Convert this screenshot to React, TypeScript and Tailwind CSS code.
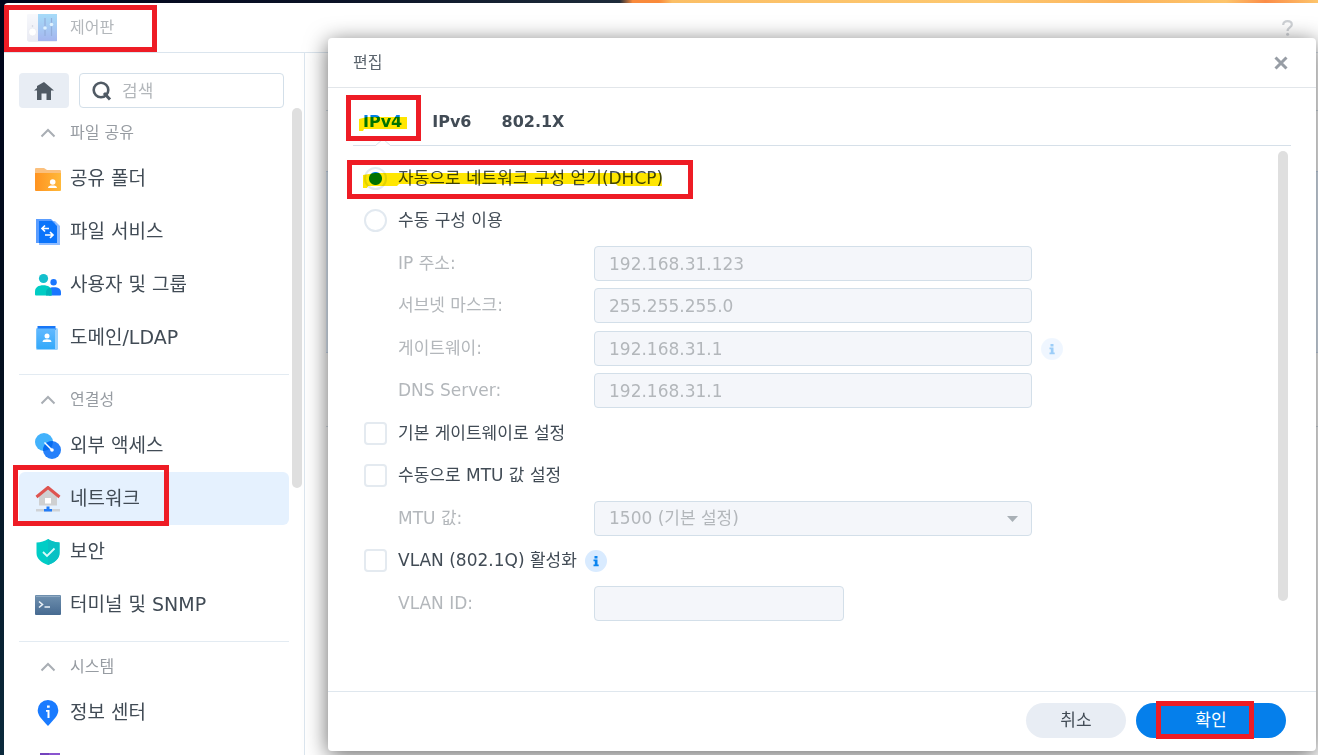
import { ReactNode, useState } from "react";
import clsx from "clsx";

interface NavItem {
  label: string;
  icon: ReactNode;
  active?: boolean;
}

interface NavGroup {
  title: string;
  items: NavItem[];
}

/* ---------- icons ---------- */

const ControlPanelIcon = () => (
  <svg width="30" height="28" viewBox="0 0 30 28" className="opacity-50">
    <defs>
      <linearGradient id="cpBlue" x1="0" y1="0" x2="0" y2="1">
        <stop offset="0" stopColor="#4fb9f3" />
        <stop offset="1" stopColor="#4c6fe0" />
      </linearGradient>
      <linearGradient id="cpGray" x1="0" y1="0" x2="0" y2="1">
        <stop offset="0" stopColor="#f1f3fa" />
        <stop offset="1" stopColor="#d5d8ea" />
      </linearGradient>
    </defs>
    <rect x="1" y="25" width="29" height="3" rx="1" fill="#dfe1ea" />
    <rect x="0" y="0" width="12" height="27" rx="1" fill="url(#cpGray)" />
    <rect x="11" y="0" width="19" height="27" fill="url(#cpBlue)" />
    <circle cx="5.5" cy="18" r="4" fill="#fff" stroke="#c9cde0" strokeWidth="0.6" />
    <circle cx="5.5" cy="12" r="0.8" fill="#9aa0b8" />
    <path d="M18 4v18M24.500 4v18" stroke="#2a5fb8" strokeWidth="1.200" />
    <circle cx="18" cy="14" r="1.800" fill="#bfe6ff" />
    <circle cx="24.500" cy="10.500" r="1.800" fill="#bfe6ff" />
  </svg>
);

const FolderIcon = () => (
  <svg width="26" height="26" viewBox="0 0 26 26">
    <defs>
      <linearGradient id="folder" x1="0" y1="0" x2="1" y2="0">
        <stop offset="0" stopColor="#ff9320" />
        <stop offset="1" stopColor="#ffb93a" />
      </linearGradient>
    </defs>
    <path d="M0 3a1 1 0 0 1 1-1h8l3 2h13a1 1 0 0 1 1 1v6H0z" fill="#fbc07d" />
    <path d="M0 7h26v17a1 1 0 0 1-1 1H1a1 1 0 0 1-1-1z" fill="url(#folder)" />
    <circle cx="17.700" cy="16" r="2.800" fill="#fff" />
    <path d="M13 22c0-2 2-2.500 4.500-2.500s4.500.5 4.500 2.500z" fill="#fff" />
  </svg>
);

const FileServiceIcon = () => (
  <svg width="26" height="26" viewBox="0 0 26 26">
    <path d="M4 2h16l5 5v19H4z" fill="#8fbcff" />
    <path d="M1 0h15l4 4v20H1z" fill="#5a9dff" />
    <path d="M4 2h13l5 5v17H4z" fill="#0b74fb" />
    <path d="M14 9.500H7m3-3-3 3 3 3M10 16h8m-3-3 3 3-3 3" fill="none" stroke="#fff" strokeWidth="1.700" />
  </svg>
);

const UsersIcon = () => (
  <svg width="26" height="26" viewBox="0 0 26 26">
    <circle cx="8.500" cy="6.500" r="4.600" fill="#14bfcd" />
    <circle cx="18.600" cy="10.300" r="3.200" fill="#1a76ff" />
    <path d="M14 23.500v-7c1-.8 2.500-1.200 5-1.200 4.500 0 7 1.700 7 5.200v2a1 1 0 0 1-1 1z" fill="#1a76ff" />
    <path d="M0 22.500v-3c0-4.200 3.500-6.200 8.300-6.200s8.200 2 8.200 6.200v4H1a1 1 0 0 1-1-1z" fill="#00ccc4" />
    <path d="M11 23.500v-3c0-2.500 1.400-4 3.500-4.800 1.300 1 2 2.300 2 4.300v3.500z" fill="#00b3b8" />
  </svg>
);

const DomainIcon = () => (
  <svg width="26" height="26" viewBox="0 0 26 26">
    <defs>
      <linearGradient id="domain" x1="0" y1="0" x2="0" y2="1">
        <stop offset="0" stopColor="#62b9ff" />
        <stop offset="1" stopColor="#33a9fa" />
      </linearGradient>
    </defs>
    <rect x="1" y="3" width="22" height="22" rx="1.500" fill="#9ad2fd" />
    <path d="M2.500 1h18v4h-18z" fill="#1877f7" />
    <path d="M1.500 3.500H20V24H3a1.500 1.500 0 0 1-1.500-1.500z" fill="url(#domain)" />
    <circle cx="12" cy="11" r="2.500" fill="#fff" />
    <path d="M7.500 17c0-2 2-2.700 4.500-2.700s4.500.7 4.500 2.700z" fill="#fff" />
  </svg>
);

const ExternalIcon = () => (
  <svg width="26" height="26" viewBox="0 0 26 26">
    <circle cx="9" cy="9" r="9" fill="#42b2fc" />
    <circle cx="17" cy="17" r="9" fill="#2680fa" />
    <path d="M8.100 15.500A9 9 0 0 1 17.800 8a9 9 0 0 1-9.700 10z" fill="#066cf0" />
    <path d="m9.500 9.500 7 7" stroke="#fff" strokeWidth="1.500" />
    <circle cx="17" cy="17" r="1.800" fill="#fff" />
  </svg>
);

const NetworkIcon = () => (
  <svg width="26" height="26" viewBox="0 0 26 26">
    <path d="M4 10 13 3l9 7v9.500H4z" fill="#cfd0d1" />
    <path d="M1 23h24v2.500H1z" fill="#cfd2d6" />
    <path d="M1.500 11 13 1.500 24.500 11" fill="none" stroke="#de5450" strokeWidth="3" />
    <rect x="10" y="12" width="6" height="5.500" fill="#fff" />
    <path d="M11.500 20.500h3V23H17v2.500H9V23h2.500z" fill="#217cf8" />
  </svg>
);

const ShieldIcon = () => (
  <svg width="26" height="26" viewBox="0 0 26 26">
    <path d="M13 0c3.500 2.300 7 3.300 11.500 3.500V14c0 6-5 9.500-11.500 12C6.500 23.500 1.500 20 1.500 14V3.500C6 3.300 9.500 2.300 13 0z" fill="#00cdc6" />
    <path d="M13 0c3.500 2.300 7 3.300 11.500 3.500V14c0 6-5 9.500-11.500 12z" fill="#08c1c4" />
    <path d="m8 13 4 4 7.500-7.500" fill="none" stroke="#d9fbfa" strokeWidth="1.800" />
  </svg>
);

const TerminalIcon = () => (
  <svg width="26" height="26" viewBox="0 0 26 26">
    <defs>
      <linearGradient id="term" x1="0" y1="0" x2="0" y2="1">
        <stop offset="0" stopColor="#6f90af" />
        <stop offset="1" stopColor="#466a91" />
      </linearGradient>
    </defs>
    <rect x="0" y="3" width="26" height="20" rx="1" fill="url(#term)" />
    <path d="M1 4.500h24" stroke="#8ea9c2" strokeWidth="1" />
    <path d="m4 9.500 3.500 3L4 15.500M9.500 15H15" fill="none" stroke="#e8eff6" strokeWidth="1.600" />
  </svg>
);

const InfoCenterIcon = () => (
  <svg width="26" height="26" viewBox="0 0 26 26">
    <path d="M13 0a10.300 10.300 0 0 1 10.300 10.500c0 5-4.500 9-10.300 15.500C7.200 19.500 2.700 15.500 2.700 10.500A10.300 10.300 0 0 1 13 0z" fill="#1a7bff" />
    <path d="M12 5.500h2.700v2.300H12zM11 10h3.500v8h-2v-6.300H11z" fill="#fff" />
  </svg>
);

const LoginPortalIcon = () => (
  <svg width="26" height="26" viewBox="0 0 26 26">
    <rect x="5" y="0" width="20" height="26" fill="#8a55cf" />
    <rect x="5" y="0" width="9" height="26" fill="#7443bd" />
  </svg>
);

const groups: NavGroup[] = [
  {
    title: "파일 공유",
    items: [
      { label: "공유 폴더", icon: <FolderIcon /> },
      { label: "파일 서비스", icon: <FileServiceIcon /> },
      { label: "사용자 및 그룹", icon: <UsersIcon /> },
      { label: "도메인/LDAP", icon: <DomainIcon /> },
    ],
  },
  {
    title: "연결성",
    items: [
      { label: "외부 액세스", icon: <ExternalIcon /> },
      { label: "네트워크", icon: <NetworkIcon />, active: true },
      { label: "보안", icon: <ShieldIcon /> },
      { label: "터미널 및 SNMP", icon: <TerminalIcon /> },
    ],
  },
  {
    title: "시스템",
    items: [
      { label: "정보 센터", icon: <InfoCenterIcon /> },
      { label: "", icon: <LoginPortalIcon /> },
    ],
  },
];

/* ---------- small pieces ---------- */

// Red frame drawn over the control it points at
const Marker = ({ className }: { className: string }) => (
  <span className={clsx("absolute border-5 border-[#ee1c25] pointer-events-none z-10", className)} />
);

const InfoBadge = ({ faded }: { faded?: boolean }) => (
  <svg width="22" height="22" viewBox="0 0 22 22" className={clsx("shrink-0", faded && "opacity-40")}>
    <circle cx="11" cy="11" r="11" fill="#d9ebff" />
    <path d="M9.500 6h3v2.400h-3zM8.500 9.500h4v5h1.200v1.700H8.500v-1.700h1.300v-3.300H8.500z" fill="#0a84ef" />
  </svg>
);

const fieldStyle =
  "h-[35px] max-w-full rounded border border-[#d3dfe9] bg-[#f4f6fa] px-3.5 text-[17px] text-[#b3b7bb]";

interface FieldRowProps {
  id: string;
  label: string;
  children: ReactNode;
}

const FieldRow = ({ id, label, children }: FieldRowProps) => (
  <div className="flex h-[35px] items-center pl-[34px]">
    <label htmlFor={id} className="w-[196px] shrink-0 text-[17px] text-[#b3b7bb]">
      {label}
    </label>
    {children}
  </div>
);

interface CheckRowProps {
  label: string;
  info?: boolean;
}

const CheckRow = ({ label, info }: CheckRowProps) => (
  <div className="flex h-[35px] items-center gap-2">
    <label className="flex items-center gap-[11px] text-[17px]">
      <input
        type="checkbox"
        className="size-[23px] appearance-none rounded border-2 border-[#e4eaf0] bg-white checked:bg-[#057feb]"
      />
      {label}
    </label>
    {info && <InfoBadge />}
  </div>
);

/* ---------- sidebar ---------- */

const Sidebar = () => (
  <aside className="flex w-[301px] shrink-0 flex-col border-r border-[#dbe5ee] pt-5">
    <div className="flex gap-2.5 pl-[15px] pr-5">
      <button aria-label="홈" className="flex h-[35px] w-[50px] shrink-0 items-center justify-center rounded bg-[#e8edf4]">
        <svg width="20" height="18" viewBox="0 0 20 18">
          <path d="M10 0 20 8.500h-3V18h-4.500v-6.500h-5V18H3V8.500H0l3-2.600V4z" fill="#505a64" />
        </svg>
      </button>
      <div className="relative flex-1">
        <svg width="20" height="20" viewBox="0 0 20 20" className="absolute left-[13px] top-2">
          <circle cx="9" cy="9" r="7.300" fill="none" stroke="#505a64" strokeWidth="2.600" />
          <path d="m12 12 6 6.500" stroke="#505a64" strokeWidth="3" />
        </svg>
        <input
          type="search"
          aria-label="검색"
          placeholder="검색"
          className="h-[35px] w-full rounded border border-[#d3dfe9] pl-[42px] pr-2 text-[17px] placeholder:text-[#b3b7bb]"
        />
      </div>
    </div>

    <div className="flex min-h-0 flex-1 justify-between">
      <nav className="flex-1 pl-[15px] pr-[3px]">
        {groups.map((group, i) => (
          <section key={group.title} className={clsx("pb-2.5", i > 0 && "border-t border-[#e3ebf2]")}>
            <h2>
              <button className="flex h-11 w-full items-center gap-[9px] pl-4 pt-1.5 text-base text-[#979ca2]">
                <svg width="26" height="10" viewBox="0 0 26 10">
                  <path d="m6.500 8.500 6.500-6.500 6.500 6.500" fill="none" stroke="#a9aeb4" strokeWidth="2" />
                </svg>
                {group.title}
              </button>
            </h2>
            {group.items.map((item, j) => (
              <a
                key={j}
                href="#"
                className={clsx(
                  "relative flex h-[53px] items-center gap-[9px] rounded-md pl-4 text-[19px]",
                  item.active && "bg-[#e5f1fe]"
                )}
              >
                {item.icon}
                {item.label}
                {item.active && <Marker className="-left-1.5 -top-[7px] h-[61px] w-[156px]" />}
              </a>
            ))}
          </section>
        ))}
      </nav>
      <div className="mr-0.5 h-[380px] w-2.5 rounded-full bg-[#dfdfdf]" />
    </div>
  </aside>
);

/* ---------- edit dialog ---------- */

const tabs = ["IPv4", "IPv6", "802.1X"];

const EditDialog = () => {
  const [mode, setMode] = useState("dhcp");

  const radioStyle =
    "size-[23px] appearance-none rounded-full border-2 border-[#e2e9f0] bg-white checked:bg-[radial-gradient(circle,#0080e8_6px,transparent_7px)]";

  return (
    <div
      role="dialog"
      aria-label="편집"
      className="absolute bottom-1 left-[328px] right-0.5 top-[38px] flex flex-col rounded bg-white shadow-[0_4px_22px_rgba(0,0,0,0.6)]"
    >
      <header className="flex h-[50px] shrink-0 items-center justify-between border-b border-[#e2e6ea] pl-[25px] pr-7">
        <h1 className="text-base text-[#5c656e]">편집</h1>
        <button aria-label="닫기">
          <svg width="14" height="14" viewBox="0 0 14 14">
            <path d="m1.500 1.500 11 11m0-11-11 11" stroke="#979da5" strokeWidth="3" />
          </svg>
        </button>
      </header>

      <div className="mx-[25px] flex h-[58px] shrink-0 items-center gap-[30px] border-b border-[#d6e0e9] pl-2.5 pt-[11px] text-base font-bold">
        {tabs.map((tab, i) => (
          <button key={tab} className={clsx("relative", i === 0 && "text-[#0080e8]")}>
            {tab}
            {i === 0 && (
              <>
                <svg width="49" height="15" viewBox="0 0 49 15" className="absolute -left-1 top-[7px] mix-blend-multiply">
                  <path d="M0 2 8 0h40v12H5l-1 2H0z" fill="#ffe600" />
                </svg>
                <svg width="16" height="7" viewBox="0 0 16 7" className="absolute left-3 top-[29px]">
                  <path d="M0 7 8 0l8 7" fill="#fff" stroke="#d6e0e9" />
                </svg>
                <Marker className="-left-[17px] -top-[15px] h-[46px] w-[75px]" />
              </>
            )}
          </button>
        ))}
      </div>

      <div className="flex min-h-0 flex-1 justify-between pl-9 pr-7 pt-[5px]">
        <form className="flex flex-1 flex-col gap-2 pt-2.5">
          <div className="flex flex-col gap-[7px]">
            <label className="relative flex h-[35px] items-center gap-[11px] self-start text-[17px]">
              <input
                type="radio"
                name="mode"
                checked={mode === "dhcp"}
                onChange={() => setMode("dhcp")}
                className={radioStyle}
              />
              자동으로 네트워크 구성 얻기(DHCP)
              <svg width="300" height="16" viewBox="0 0 300 16" className="absolute -left-px top-[11px] mix-blend-multiply">
                <path d="M0 3 12 1h286l1 13h-44l-2-2H36l-2 2H5l-1 2H0z" fill="#ffe600" />
              </svg>
              <Marker className="-left-[17px] -top-px h-[39px] w-[346px]" />
            </label>
            <label className="flex h-[35px] items-center gap-[11px] self-start text-[17px]">
              <input
                type="radio"
                name="mode"
                checked={mode === "manual"}
                onChange={() => setMode("manual")}
                className={radioStyle}
              />
              수동 구성 이용
            </label>
          </div>

          <div className="flex flex-col gap-[7px]">
            <FieldRow id="ip" label="IP 주소:">
              <input id="ip" disabled defaultValue="192.168.31.123" className={clsx(fieldStyle, "w-[438px]")} />
            </FieldRow>
            <FieldRow id="subnet" label="서브넷 마스크:">
              <input id="subnet" disabled defaultValue="255.255.255.0" className={clsx(fieldStyle, "w-[438px]")} />
            </FieldRow>
          </div>

          <div className="flex flex-col gap-[7px]">
            <FieldRow id="gateway" label="게이트웨이:">
              <input id="gateway" disabled defaultValue="192.168.31.1" className={clsx(fieldStyle, "mr-[9px] w-[438px]")} />
              <InfoBadge faded />
            </FieldRow>
            <FieldRow id="dns" label="DNS Server:">
              <input id="dns" disabled defaultValue="192.168.31.1" className={clsx(fieldStyle, "w-[438px]")} />
            </FieldRow>
          </div>

          <div className="flex flex-col gap-[7px]">
            <CheckRow label="기본 게이트웨이로 설정" />
            <CheckRow label="수동으로 MTU 값 설정" />
          </div>

          <div className="flex flex-col gap-[7px]">
            <FieldRow id="mtu" label="MTU 값:">
              <div className="relative w-[438px] max-w-full">
                <select id="mtu" disabled className={clsx(fieldStyle, "w-full appearance-none opacity-100")}>
                  <option>1500 (기본 설정)</option>
                </select>
                <svg width="11" height="6" viewBox="0 0 11 6" className="absolute right-3.5 top-[15px]">
                  <path d="M0 0h11L5.500 6z" fill="#a9b0b6" />
                </svg>
              </div>
            </FieldRow>
            <CheckRow label="VLAN (802.1Q) 활성화" info />
          </div>

          <FieldRow id="vlan" label="VLAN ID:">
            <input id="vlan" disabled className={clsx(fieldStyle, "w-[250px]")} />
          </FieldRow>
        </form>
        <div className="h-5/6 w-2.5 rounded-full bg-[#dfdfdf]" />
      </div>

      <footer className="flex h-[60px] shrink-0 items-center justify-end gap-2.5 border-t border-[#dfe7ee] pb-0.5 pr-[30px] text-[17px]">
        <button className="h-[35px] w-[100px] rounded-full bg-[#e8edf4]">취소</button>
        <button className="relative h-[35px] w-[150px] rounded-full bg-[#057feb] text-white">
          확인
          <Marker className="-top-0.5 left-5 h-[38px] w-[98px]" />
        </button>
      </footer>
    </div>
  );
};

export default function App() {
  return (
    <div className="relative flex h-screen flex-col overflow-hidden bg-linear-to-b from-[#00041a] via-[#04101f] to-[#0b2a3c] pl-1 font-['DejaVu_Sans','Noto_Sans_CJK_KR',sans-serif] text-[#414b55]">
      {/* visible strip of the desktop wallpaper */}
      <div className="-ml-1 h-[3px] shrink-0 bg-[linear-gradient(90deg,#00041a_0%,#0a1226_25%,#1d2b3a_47%,#f98a3c_48%,#fa8a3a_50%,#fbbf66_51%,#fdc870_75%,#fcb45c_85%,#fdc56c_93%,#fb8d48_96%,#fdc56c_100%)]" />

      <div className="flex min-h-0 flex-1 flex-col rounded-tl-sm bg-white">
        <header className="relative flex h-[50px] shrink-0 items-center justify-between border-b border-[#dbe5ee] pl-[23px] pr-[25px]">
          <div className="flex items-center gap-[13px] text-base text-[#b3b7bb]">
            <ControlPanelIcon />
            제어판
          </div>
          <button aria-label="도움말">
            <svg width="11" height="16" viewBox="0 0 11 16">
              <path d="M1.200 5C1.200 2.500 3 1.200 5.500 1.200S9.800 2.500 9.800 4.700C9.800 7.500 5.600 7.500 5.600 11" fill="none" stroke="#cfd2d6" strokeWidth="2.200" />
              <circle cx="5.600" cy="14.200" r="1.500" fill="#cfd2d6" />
            </svg>
          </button>
          <Marker className="left-0 top-0.5 h-[47px] w-[153px]" />
        </header>

        <div className="flex min-h-0 flex-1">
          <Sidebar />
          {/* interface list, almost fully covered by the dialog */}
          <main className="flex-1 pl-[21px] pt-[57px]">
            <div className="h-[61px] border-t border-[#d6e0e9]" />
            <div className="h-[182px] border-y border-[#cddcf0] bg-[#e5f1fe]" />
            <div className="h-[74px] border-b border-[#d6e0e9]" />
          </main>
        </div>
      </div>

      <EditDialog />
    </div>
  );
}
